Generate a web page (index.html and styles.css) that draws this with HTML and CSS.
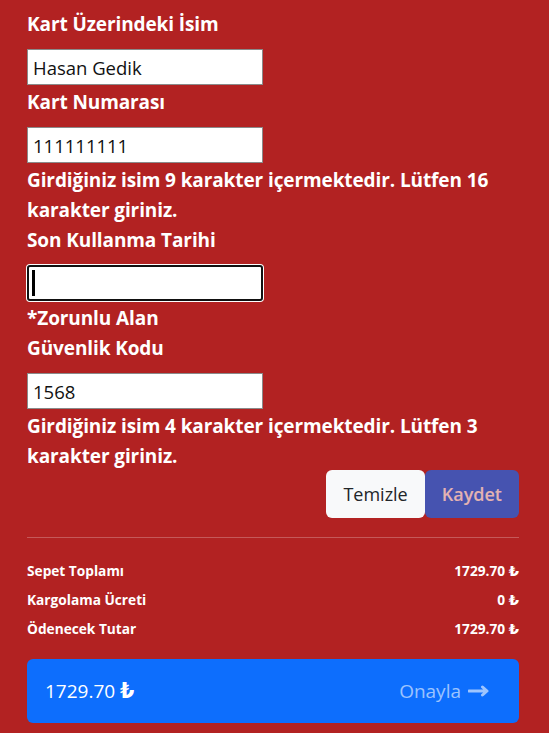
FILE: index.html
```html
<!DOCTYPE html>
<html lang="tr">
<head>
<meta charset="utf-8">
<title>Ödeme</title>
<link rel="stylesheet" href="styles.css">
</head>
<body>
<main class="page">
  <form class="form">
    <label class="lbl">Kart Üzerindeki İsim</label>
    <input class="inp" type="text" value="Hasan Gedik">
    <label class="lbl">Kart Numarası</label>
    <input class="inp" type="text" value="111111111">
    <p class="msg">Girdiğiniz isim 9 karakter içermektedir. Lütfen 16 karakter giriniz.</p>
    <label class="lbl">Son Kullanma Tarihi</label>
    <div class="inp inp-focus"><span class="caret"></span></div>
    <p class="msg">*Zorunlu Alan</p>
    <label class="lbl">Güvenlik Kodu</label>
    <input class="inp" type="text" value="1568">
    <p class="msg">Girdiğiniz isim 4 karakter içermektedir. Lütfen 3 karakter giriniz.</p>
    <div class="actions">
      <button type="button" class="btn btn-light">Temizle</button>
      <button type="button" class="btn btn-primary" disabled>Kaydet</button>
    </div>
  </form>
  <hr class="sep">
  <div class="summary">
    <div class="row"><span>Sepet Toplamı</span><span>1729.70 <span class="tl">₺</span></span></div>
    <div class="row"><span>Kargolama Ücreti</span><span>0 <span class="tl">₺</span></span></div>
    <div class="row"><span>Ödenecek Tutar</span><span>1729.70 <span class="tl">₺</span></span></div>
  </div>
  <button type="button" class="confirm">
    <span class="total">1729.70 <span class="tl">₺</span></span>
    <span class="go">Onayla
      <svg class="arrow" width="22" height="14" viewBox="0 0 22 14" aria-hidden="true"><path d="M1 7H18.5M14.5 3L19 7L14.5 11" fill="none" stroke="currentColor" stroke-width="3" stroke-linecap="round" stroke-linejoin="round"/></svg>
    </span>
  </button>
</main>
</body>
</html>
```
FILE: styles.css
```css
* { box-sizing: border-box; }
html, body { margin: 0; padding: 0; }
body {
  background: #b22222;
  color: #fff;
  font-family: "Open Sans", "Noto Sans", sans-serif;
  width: 549px;
  height: 733px;
  overflow: hidden;
}
.page {
  padding: 9px 30px 0 27px;
}
.form {
  display: flex;
  flex-direction: column;
  align-items: flex-start;
}
.lbl, .msg {
  font-size: 19px;
  font-weight: 700;
  line-height: 30px;
  margin: 0;
  letter-spacing: -0.1px;
}
.lbl { margin-bottom: 10px; }
.inp {
  width: 236px;
  height: 36px;
  border: 1px solid #8a8a8a;
  background: #fff;
  padding: 0 5px;
  font-family: "Open Sans", "Noto Sans", sans-serif;
  font-size: 18.5px;
  color: #111;
  margin: 0 0 2px 0;
  outline: none;
}
.inp-focus {
  border: 2px solid #111;
  border-radius: 3px;
  box-shadow: 0 0 0 1px #fff;
  display: flex;
  align-items: center;
  padding: 0 0 0 3px;
}
.caret {
  width: 3px;
  height: 26px;
  background: #000;
}
.actions {
  align-self: flex-end;
  display: flex;
  margin-top: -1px;
}
.btn {
  height: 48px;
  padding: 0 16px;
  font-family: "Open Sans", "Noto Sans", sans-serif;
  font-size: 18px;
  border: 1px solid transparent;
  border-radius: 6px;
}
.btn-light { background: #f8f9fa; color: #212529; }
.btn-primary { background: #0d6efd; color: #fff; opacity: .65; font-weight: 600; }
.sep {
  border: 0;
  border-top: 1px solid rgba(255,255,255,.25);
  margin: 19px 0 18px 0;
}
.summary {
  display: flex;
  flex-direction: column;
}
.row {
  display: flex;
  justify-content: space-between;
  font-size: 13.7px;
  font-weight: 700;
  line-height: 29px;
}
.tl {
  font-family: "DejaVu Sans", "Noto Sans", sans-serif;
  font-weight: 700;
  font-size: 1.08em;
}
.confirm {
  margin-top: 16px;
  width: 100%;
  height: 64px;
  border: 0;
  border-radius: 6px;
  background: #0d6efd;
  color: #fff;
  display: flex;
  justify-content: space-between;
  align-items: center;
  padding: 0 29px 0 18px;
  font-family: "Open Sans", "Noto Sans", sans-serif;
  font-size: 19px;
}
.go {
  color: rgba(255,255,255,.6);
  display: flex;
  align-items: center;
  gap: 7px;
}
.arrow { display: block; }
```
